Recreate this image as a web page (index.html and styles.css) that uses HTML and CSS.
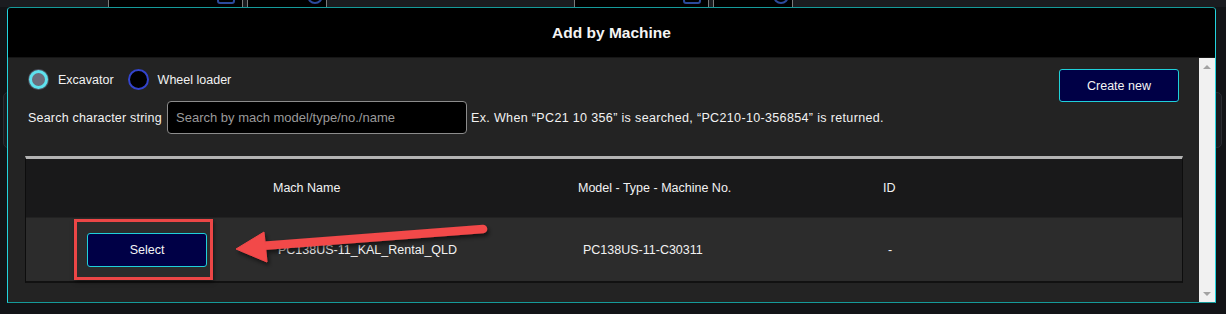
FILE: index.html
```html
<!DOCTYPE html>
<html>
<head>
<meta charset="utf-8">
<link rel="stylesheet" href="styles.css">
</head>
<body>
<div class="page">
  <div class="bg-top">
    <div class="tab tab-a"><span class="ico-sq"></span></div>
    <div class="tab-gap"></div>
    <div class="tab tab-b"><span class="ico-ci"></span></div>
    <div class="spacer"></div>
    <div class="tab tab-a"><span class="ico-sq"></span></div>
    <div class="tab-gap"></div>
    <div class="tab tab-b"><span class="ico-ci"></span></div>
  </div>
  <div class="bg-sides"><div class="side side-l"></div><div class="side side-r"></div></div>
</div>

<div class="modal">
  <div class="modal-head">Add by Machine</div>
  <div class="modal-main">
    <div class="modal-body">
      <div class="controls">
        <div class="filters">
          <div class="radios">
            <label class="radio"><span class="dot on"></span>Excavator</label>
            <label class="radio"><span class="dot"></span>Wheel loader</label>
          </div>
          <div class="search">
            <span class="search-label">Search character string</span>
            <input class="input" type="text" placeholder="Search by mach model/type/no./name">
            <span class="hint">Ex. When “PC21 10 356” is searched, “PC210-10-356854” is returned.</span>
          </div>
        </div>
        <button class="btn create">Create new</button>
      </div>
      <div class="table">
        <div class="row head">
          <div class="cell"></div>
          <div class="cell">Mach Name</div>
          <div class="cell">Model - Type - Machine No.</div>
          <div class="cell">ID</div>
        </div>
        <div class="row data">
          <div class="cell cell-btn"><button class="btn select">Select</button></div>
          <div class="cell">PC138US-11_KAL_Rental_QLD</div>
          <div class="cell">PC138US-11-C30311</div>
          <div class="cell">-</div>
        </div>
      </div>
    </div>
    <div class="scrollbar"><span class="arr up"></span><span class="arr down"></span></div>
  </div>
  <div class="annot-box"></div>
  <svg class="annot-arrow" width="275" height="55" viewBox="0 0 275 55">
    <defs>
      <filter id="sh" x="-10%" y="-30%" width="120%" height="180%">
        <feDropShadow dx="2" dy="3" stdDeviation="2" flood-color="#000" flood-opacity="0.55"/>
      </filter>
    </defs>
    <g filter="url(#sh)" fill="#f24849" stroke="#f24849">
      <line x1="36" y1="31" x2="258" y2="14" stroke-width="8.5" stroke-linecap="round"/>
      <polygon points="11,34 39,17 42,47" stroke-width="1" stroke-linejoin="round"/>
    </g>
  </svg>
</div>
</body>
</html>
```

FILE: styles.css
```css
* { box-sizing: border-box; }
html, body {
  margin: 0;
  padding: 0;
}
body {
  width: 1226px;
  height: 314px;
  overflow: hidden;
  background: #131417;
  font-family: "Liberation Sans", Arial, sans-serif;
  font-size: 12.5px;
  color: #f2f2f2;
  position: relative;
}

/* background page pieces */
.page { width: 1226px; height: 314px; }
.bg-top {
  height: 7px;
  display: flex;
  padding-left: 108px;
  background: #1b1c20;
  overflow: hidden;
}
.tab {
  height: 7px;
  background: #000;
  border-left: 1px solid #7c7c7c;
  border-right: 1px solid #7c7c7c;
  display: flex;
  justify-content: flex-end;
  align-items: flex-end;
  overflow: hidden;
}
.tab-a { width: 135px; }
.tab-b { width: 80px; }
.tab-gap { width: 4px; }
.spacer { width: 247px; }
.ico-sq {
  width: 18px;
  height: 12px;
  border: 2px solid #2c4a9c;
  border-radius: 3px;
  margin-right: 7px;
  margin-bottom: 3px;
  flex: none;
}
.ico-ci {
  width: 16px;
  height: 16px;
  border: 2px solid #2c4a9c;
  border-radius: 50%;
  margin-right: 3px;
  margin-bottom: 3px;
  flex: none;
}
.bg-sides {
  display: flex;
  justify-content: space-between;
  margin-top: 85px;
  padding: 0 4px 0 3px;
}
.side {
  width: 10px;
  height: 56px;
  background: #1a1b1f;
  border: 1px solid #2a2c31;
  border-radius: 5px;
}

/* modal */
.modal {
  position: absolute;
  left: 7px;
  top: 7px;
  width: 1209px;
  height: 296px;
  border: 1px solid #22d4de;
  border-top-color: #159a9a;
  border-bottom-color: #159a9a;
  border-radius: 4px 4px 0 0;
  background: #232323;
  display: flex;
  flex-direction: column;
  overflow: hidden;
}
.modal-head {
  height: 50px;
  flex: none;
  background: #000;
  display: flex;
  align-items: center;
  justify-content: center;
  font-weight: bold;
  font-size: 15.5px;
  color: #f4f4f4;
  border-bottom: 1px solid #161616;
}
.modal-main {
  flex: 1;
  display: flex;
  min-height: 0;
}
.modal-body {
  flex: 1;
  padding: 11px 16px 0 17px;
}
.scrollbar {
  width: 16px;
  background: #f1f1f1;
  display: flex;
  flex-direction: column;
  justify-content: space-between;
  align-items: center;
  padding: 7px 0 6px;
}
.arr {
  width: 0;
  height: 0;
  border-left: 4px solid transparent;
  border-right: 4px solid transparent;
}
.arr.up { border-bottom: 4px solid #a3a3a3; }
.arr.down { border-top: 4px solid #a3a3a3; }

.controls {
  display: flex;
  justify-content: space-between;
  align-items: flex-start;
  padding: 0 4px 0 3px;
}
.filters {
  display: flex;
  flex-direction: column;
  gap: 11px;
}
.radios {
  display: flex;
  align-items: center;
  gap: 14px;
  height: 21px;
}
.radio {
  display: flex;
  align-items: center;
  gap: 9px;
}
.dot {
  width: 21px;
  height: 21px;
  border-radius: 50%;
  background: #000;
  border: 2px solid #3344cc;
}
.dot.on {
  width: 19px;
  height: 19px;
  margin: 1px;
  background: #6b6e7d;
  border: 3px solid #5ee2ee;
  box-shadow: 0 0 0 1px #4e5260;
}
.search {
  display: flex;
  align-items: center;
  height: 33px;
}
.search-label { width: 139px; letter-spacing: 0.2px; white-space: nowrap; }
.input {
  width: 300px;
  height: 33px;
  background: #000;
  border: 1px solid #8c8c8c;
  border-radius: 4px;
  padding: 0 8px;
  font-family: inherit;
  font-size: 13px;
  color: #fff;
  outline: none;
  margin-right: 4px;
}
.input::placeholder { color: #9a9a9a; }
.hint { letter-spacing: 0.35px; }

.btn {
  font-family: inherit;
  font-size: 12.5px;
  color: #f4f4f4;
  background: #000046;
  border: 1px solid #1fd0da;
  border-radius: 3px;
  cursor: pointer;
}
.create { width: 120px; height: 33px; }
.select { width: 120px; height: 34px; }

.table {
  margin-top: 22px;
  width: 1158px;
  border-top: 3px solid #b3b3b3;
  border-left: 1px solid #0d0d0d;
  border-right: 1px solid #0d0d0d;
  border-bottom: 2px solid #111;
}
.row {
  display: grid;
  grid-template-columns: 242px 305px 305px 1fr;
  align-items: center;
}
.row.head {
  height: 58px;
  background: #19191a;
}
.row.head .cell { padding-left: 5px; }
.row.data {
  height: 64px;
  background: #2c2c2c;
  border-top: 1px solid #222;
}
.row.data .cell { padding-left: 10px; }
.row.data .cell-btn {
  padding-left: 0;
  display: flex;
  justify-content: center;
}

/* annotation overlay */
.annot-box {
  position: absolute;
  left: 66px;
  top: 211px;
  width: 139px;
  height: 61px;
  border: 3px solid #ec4646;
  box-shadow: 1px 2px 4px rgba(0,0,0,0.5);
}
.annot-arrow {
  position: absolute;
  left: 217px;
  top: 207px;
}
```
